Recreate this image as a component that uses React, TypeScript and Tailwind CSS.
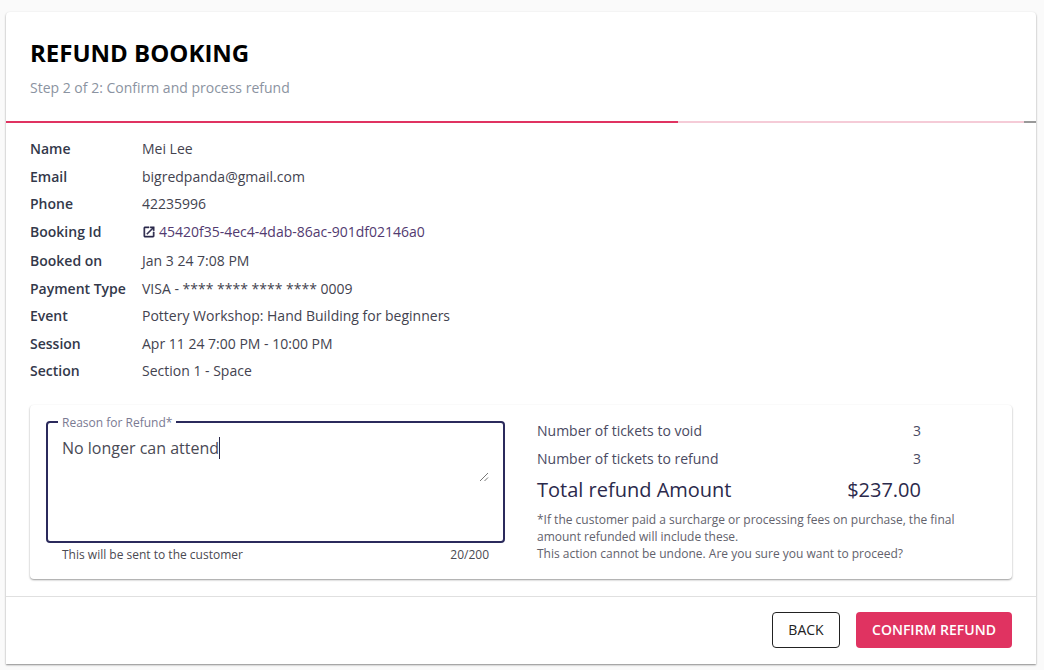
import React from "react";

type Row = {
  label: string;
  value: string;
  link?: boolean;
};

const rows: Row[] = [
  { label: "Name", value: "Mei Lee" },
  { label: "Email", value: "bigredpanda@gmail.com" },
  { label: "Phone", value: "42235996" },
  { label: "Booking Id", value: "45420f35-4ec4-4dab-86ac-901df02146a0", link: true },
  { label: "Booked on", value: "Jan 3 24 7:08 PM" },
  { label: "Payment Type", value: "VISA - **** **** **** **** 0009" },
  { label: "Event", value: "Pottery Workshop: Hand Building for beginners" },
  { label: "Session", value: "Apr 11 24 7:00 PM - 10:00 PM" },
  { label: "Section", value: "Section 1 - Space" },
];

const OpenIcon = () => (
  <svg viewBox="0 0 24 24" className="w-[14px] h-[14px] mr-[3px] shrink-0" fill="#2b2a4c" stroke="#2b2a4c" strokeWidth="0.8">
    <path d="M19 19H5V5h7V3H5a2 2 0 0 0-2 2v14a2 2 0 0 0 2 2h14c1.1 0 2-.9 2-2v-7h-2v7zM14 3v2h3.59l-9.83 9.83 1.41 1.41L19 6.41V10h2V3h-7z" />
  </svg>
);

const App: React.FC = () => {
  return (
    <div className="w-[1044px] h-[670px] overflow-hidden bg-[#fafafa] pt-3 px-[6px] pr-2 font-['Open_Sans',sans-serif] text-[#2b2a4c]">
      <div className="h-[652px] w-[1030px] bg-white rounded-t shadow-[0_1px_2px_rgba(0,0,0,0.45)] flex flex-col">
        <div className="h-[109px] px-6 pt-[23px]">
          <h1 className="text-2xl leading-[36px] font-bold text-black">REFUND BOOKING</h1>
          <p className="mt-[7px] text-sm leading-[20px] text-[#8b93a1]">
            Step 2 of 2: Confirm and process refund
          </p>
        </div>

        <div className="flex h-[2px] shrink-0">
          <div className="w-[672px] bg-[#e03361]" />
          <div className="w-[346px] bg-[#f5cbd7]" />
          <div className="flex-1 bg-[#999999]" />
        </div>

        <div className="px-6 pt-[16px] flex flex-col gap-[7.5px]">
          {rows.map((row) => (
            <div
              key={row.label}
              className={`flex h-[20px] items-center text-sm leading-[20px] ${row.link ? "mb-[2px]" : ""}`}
            >
              <div className="w-[112px] font-semibold text-[#33384a]">{row.label}</div>
              {row.link && <OpenIcon />}
              <div className={row.link ? "text-[#523a70]" : "text-[#43434f]"}>{row.value}</div>
            </div>
          ))}
        </div>

        <div className="mx-6 mt-[24px] h-[174px] shrink-0 rounded bg-white shadow-[0_1px_2px_rgba(0,0,0,0.4)] flex pl-4 pt-4">
          <div className="w-[459px] shrink-0">
            <div className="relative h-[122px] rounded border-2 border-[#2b2a5c] px-[14px] pt-[13px]">
              <span className="absolute left-[10px] -top-[8px] bg-white px-[4px] text-xs leading-[16px] text-[#7a7a92]">
                Reason for Refund*
              </span>
              <div className="flex items-center text-base leading-[24px] text-[#4a4a55]">
                No longer can attend
                <span className="w-px h-[22px] bg-[#2b2a4c]" />
              </div>
              <svg className="absolute right-[14px] top-[49px]" width="10" height="10" viewBox="0 0 10 10">
                <path d="M1 9 9 1M5.5 9 9 5.5" stroke="#555555" strokeWidth="0.8" fill="none" />
              </svg>
            </div>
            <div className="flex justify-between px-4 pt-1 text-xs leading-[16px] text-[#4a4a52]">
              <span>This will be sent to the customer</span>
              <span>20/200</span>
            </div>
          </div>

          <div className="ml-8 w-[384px]">
            <div className="flex justify-between text-[#4a4a62] w-[384px] text-sm leading-[20px]">
              <span>Number of tickets to void</span>
              <span>3</span>
            </div>
            <div className="flex justify-between text-[#4a4a62] mt-2 text-sm leading-[20px]">
              <span>Number of tickets to refund</span>
              <span>3</span>
            </div>
            <div className="flex justify-between mt-[7px] text-[20px] leading-[28px] text-[#2b2a4c]">
              <span>Total refund Amount</span>
              <span>$237.00</span>
            </div>
            <p className="mt-[7px] w-[430px] text-xs leading-[17px] text-[#62626c]">
              *If the customer paid a surcharge or processing fees on purchase, the final amount refunded will include these.
              <br />
              This action cannot be undone. Are you sure you want to proceed?
            </p>
          </div>
        </div>

        <div className="mt-[17px] border-t border-[#e0e0e0] flex justify-end gap-4 pt-[15px] pr-6">
          <button className="h-9 w-[68px] rounded border border-[#222222] text-sm font-medium text-[#222222]">
            BACK
          </button>
          <button className="h-9 w-[156px] rounded bg-[#e03361] text-sm font-semibold text-white">
            CONFIRM REFUND
          </button>
        </div>
      </div>
    </div>
  );
};

export default App;
